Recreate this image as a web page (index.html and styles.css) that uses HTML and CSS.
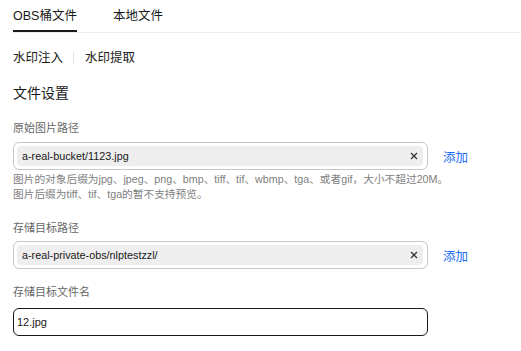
FILE: index.html
```html
<!DOCTYPE html>
<html lang="zh-CN">
<head>
	<meta charset="UTF-8">
	<title>水印注入</title>
	<link rel="stylesheet" href="styles.css">
</head>
<body>
	<div class="page">
		<div class="tabs">
			<span class="tab active">OBS桶文件</span>
			<span class="tab">本地文件</span>
		</div>

		<div class="subtabs">
			<span class="sub active">水印注入</span>
			<i class="split"></i>
			<span class="sub">水印提取</span>
		</div>

		<h3 class="title">文件设置</h3>

		<p class="label first">原始图片路径</p>
		<div class="row">
			<div class="field">
				<span class="tag">
					<span class="tag-text">a-real-bucket/1123.jpg</span>
					<svg class="close" width="8" height="8" viewBox="0 0 8 8"><path d="M1 1L7 7M7 1L1 7" stroke="#333" stroke-width="1.3" fill="none"/></svg>
				</span>
			</div>
			<a class="add" href="javascript:;">添加</a>
		</div>
		<p class="help">
			图片的对象后缀为jpg、jpeg、png、bmp、tiff、tif、wbmp、tga、或者gif，大小不超过20M。<br>
			图片后缀为tiff、tif、tga的暂不支持预览。
		</p>

		<p class="label">存储目标路径</p>
		<div class="row">
			<div class="field">
				<span class="tag">
					<span class="tag-text">a-real-private-obs/nlptestzzl/</span>
					<svg class="close" width="8" height="8" viewBox="0 0 8 8"><path d="M1 1L7 7M7 1L1 7" stroke="#333" stroke-width="1.3" fill="none"/></svg>
				</span>
			</div>
			<a class="add" href="javascript:;">添加</a>
		</div>

		<p class="label name">存储目标文件名</p>
		<div class="row row-last">
			<input class="text" type="text" value="12.jpg" />
		</div>
	</div>
</body>
</html>
```

FILE: styles.css
```css
body{
	margin: 0;
	font-family: "Liberation Sans", "Noto Sans CJK SC", sans-serif;
	color: #191919;
	background: #fff;
}

.page{
	padding-left: 13px;
}

.tabs{
	display: flex;
	gap: 36px;
	height: 32px;
	border-bottom: 1px solid #eeeeee;
}

.tab{
	font-size: 12.5px;
	line-height: 32px;
	color: #191919;
}

.tab.active{
	box-shadow: inset 0 -2px 0 #191919;
}

.subtabs{
	display: flex;
	align-items: center;
	margin-top: 15px;
	height: 20px;
}

.sub{
	font-size: 12.5px;
	line-height: 20px;
}

.split{
	display: inline-block;
	width: 1px;
	height: 12px;
	background: #dfe1e6;
	margin: 0 11px 0 10px;
}

.title{
	margin: 15px 0 0 0;
	font-size: 14px;
	font-weight: normal;
	line-height: 20px;
}

.label{
	margin: 18px 0 0 0;
	font-size: 11px;
	line-height: 16px;
	color: #666;
}

.label.first{
	margin-top: 17px;
}

.label.name{
	margin-top: 15px;
}

.row{
	display: flex;
	align-items: center;
	margin-top: 5px;
}

.label.first + .row{
	margin-top: 6px;
}

.row-last{
	margin-top: 8px;
}

.field{
	box-sizing: border-box;
	width: 415px;
	height: 28px;
	padding: 3px 4px 3px 3px;
	border: 1px solid #c7c7c7;
	border-radius: 6px;
	display: flex;
}

.tag{
	flex: 1;
	display: flex;
	align-items: center;
	justify-content: space-between;
	height: 20px;
	padding: 0 5px 0 5px;
	background: #eeeeee;
	border-radius: 4px;
	font-size: 10.8px;
	color: #191919;
}

.close{
	display: block;
}

.add{
	margin-left: 15px;
	font-size: 12.5px;
	color: #1b6cf2;
	text-decoration: none;
}

.help{
	margin: 2px 0 0 0;
	font-size: 10.7px;
	line-height: 15px;
	color: #808080;
}

.text{
	box-sizing: border-box;
	width: 415px;
	height: 28px;
	padding: 0 3px;
	border: 1px solid #191919;
	border-radius: 6px;
	font-family: inherit;
	font-size: 11px;
	color: #191919;
	outline: none;
}
```
